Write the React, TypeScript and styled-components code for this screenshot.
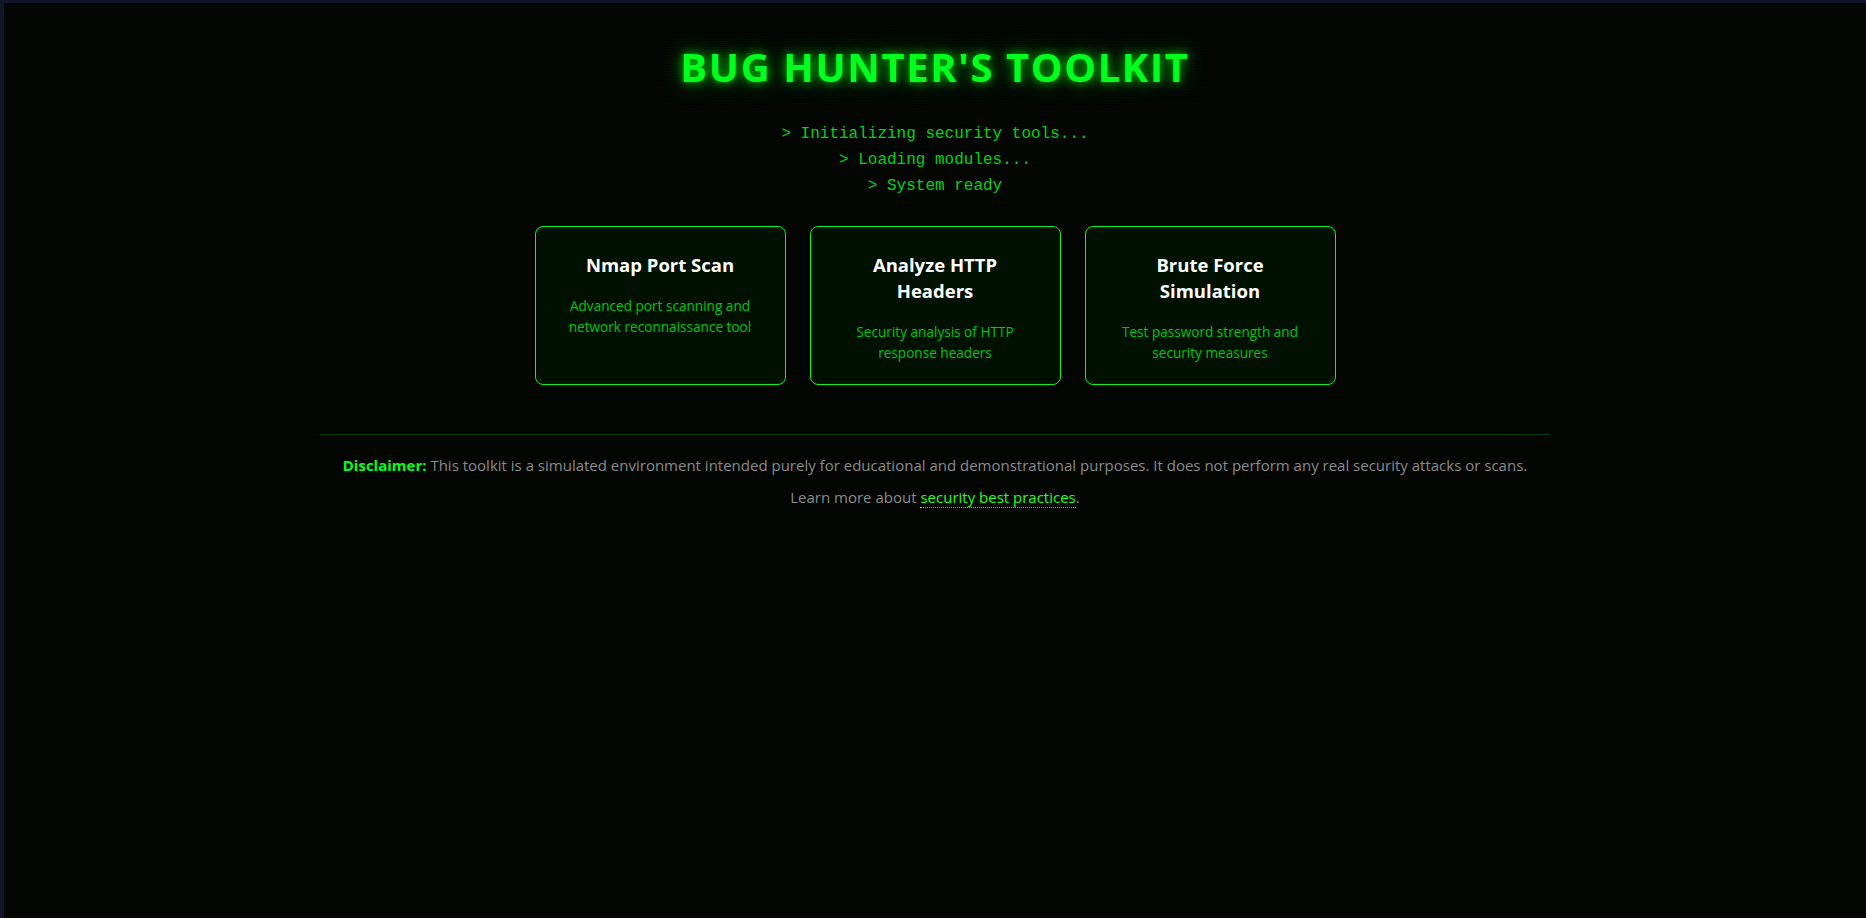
import styled, { createGlobalStyle } from "styled-components";

// Types
interface Tool {
  title: string;
  description: string;
}

const tools: Tool[] = [
  {
    title: "Nmap Port Scan",
    description: "Advanced port scanning and network reconnaissance tool",
  },
  {
    title: "Analyze HTTP Headers",
    description: "Security analysis of HTTP response headers",
  },
  {
    title: "Brute Force Simulation",
    description: "Test password strength and security measures",
  },
];

const bootLines = [
  "> Initializing security tools...",
  "> Loading modules...",
  "> System ready",
];

const GlobalStyle = createGlobalStyle`
  html, body {
    margin: 0;
    padding: 0;
    background: #13152b;
  }

  body {
    font-family: "Open Sans", "Noto Sans", sans-serif;
  }

  * {
    box-sizing: border-box;
  }
`;

const Screen = styled.div`
  margin: 3px 0 0 4px;
  min-height: calc(100vh - 3px);
  background-color: #010401;
  background-image: repeating-linear-gradient(
    0deg,
    rgba(0, 255, 0, 0.025) 0px,
    rgba(0, 255, 0, 0.025) 1px,
    transparent 1px,
    transparent 2px
  );
  display: flex;
  flex-direction: column;
  align-items: center;
  padding: 40px 20px;
`;

const Title = styled.h1`
  margin: 0;
  font-family: "Open Sans", "Noto Sans", sans-serif;
  font-size: 40px;
  font-weight: 700;
  letter-spacing: 1.6px;
  line-height: 48px;
  color: #00ff1e;
  text-shadow: 0 0 10px rgba(0, 255, 0, 0.75), 0 0 22px rgba(0, 255, 0, 0.45);
`;

const Terminal = styled.div`
  margin-top: 33px;
  display: flex;
  flex-direction: column;
  align-items: center;
  gap: 6px;
`;

const TermLine = styled.div`
  font-family: "Liberation Mono", "Courier New", monospace;
  font-size: 16px;
  line-height: 20px;
  color: #00d418;
`;

const CardGrid = styled.div`
  margin-top: 30px;
  display: grid;
  grid-template-columns: repeat(3, 251px);
  gap: 24px;
`;

const Card = styled.div`
  border: 1px solid #13f01a;
  border-radius: 8px;
  background: #001100;
  padding: 25px 24px 21px;
  text-align: center;
`;

const CardTitle = styled.h3`
  margin: 0 0 18px;
  font-size: 18.5px;
  font-weight: 700;
  line-height: 26px;
  color: #ffffff;
`;

const CardText = styled.p`
  margin: 0;
  font-size: 13.6px;
  line-height: 20.5px;
  color: #00c416;
`;

const Footer = styled.footer`
  margin-top: 49px;
  width: 1230px;
  border-top: 1px solid #0b3a0b;
  padding-top: 18px;
  text-align: center;
`;

const FooterText = styled.p`
  margin: 0 0 8px;
  font-size: 15px;
  line-height: 24px;
  color: #8a8a8a;
`;

const Strong = styled.strong`
  color: #00ff1e;
  font-weight: 700;
`;

const Link = styled.a`
  color: #22ff22;
  text-decoration: none;
  border-bottom: 1px dotted #22ff22;
`;

const App = () => {
  return (
    <>
      <GlobalStyle />
      <Screen>
        <Title>BUG HUNTER'S TOOLKIT</Title>
        <Terminal>
          {bootLines.map((line) => (
            <TermLine key={line}>{line}</TermLine>
          ))}
        </Terminal>
        <CardGrid>
          {tools.map((tool) => (
            <Card key={tool.title}>
              <CardTitle>{tool.title}</CardTitle>
              <CardText>{tool.description}</CardText>
            </Card>
          ))}
        </CardGrid>
        <Footer>
          <FooterText>
            <Strong>Disclaimer:</Strong> This toolkit is a simulated environment
            intended purely for educational and demonstrational purposes. It
            does not perform any real security attacks or scans.
          </FooterText>
          <FooterText>
            Learn more about <Link href="#">security best practices</Link>.
          </FooterText>
        </Footer>
      </Screen>
    </>
  );
};

export default App;
